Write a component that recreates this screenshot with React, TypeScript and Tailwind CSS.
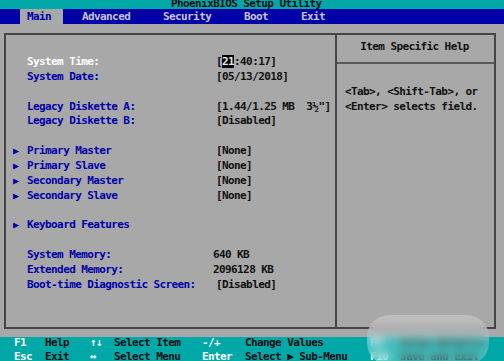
import React from "react";

const mono = { fontFamily: '"DejaVu Sans Mono", "Liberation Mono", monospace' };

type Row =
  | { blank: true }
  | { arrow?: boolean; label: string; value?: React.ReactNode; white?: boolean; shift?: boolean };

const rows: Row[] = [
  {
    label: "System Time:",
    white: true,
    value: (
      <span>
        [<span className="bg-black text-[#e8e8e8]">21</span>:40:17]
      </span>
    ),
  },
  { label: "System Date:", value: "[05/13/2018]" },
  { blank: true },
  { label: "Legacy Diskette A:", value: "[1.44/1.25 MB  3½\"]" },
  { label: "Legacy Diskette B:", value: "[Disabled]" },
  { blank: true },
  { arrow: true, label: "Primary Master", value: "[None]" },
  { arrow: true, label: "Primary Slave", value: "[None]" },
  { arrow: true, label: "Secondary Master", value: "[None]" },
  { arrow: true, label: "Secondary Slave", value: "[None]" },
  { blank: true },
  { arrow: true, label: "Keyboard Features" },
  { blank: true },
  { label: "System Memory:", value: "640 KB", shift: true },
  { label: "Extended Memory:", value: "2096128 KB", shift: true },
  { label: "Boot-time Diagnostic Screen:", value: "[Disabled]" },
];

export default function App() {
  return (
    <div
      className="w-[504px] h-[361px] bg-[#a8a8a8] flex flex-col overflow-hidden text-[11px] font-bold tracking-[-0.6px] relative"
      style={mono}
    >
      {/* title bar */}
      <div className="h-[9px] bg-[#00a8a8] overflow-hidden shrink-0">
        <div className="pl-[171px] leading-[11px] -mt-[2px] text-[#101010] whitespace-pre">
          PhoenixBIOS Setup Utility
        </div>
      </div>

      {/* menu bar */}
      <div className="h-[15px] bg-[#0000a8] flex leading-[15px] shrink-0 text-[#c4c4d4] whitespace-pre">
        <div className="ml-[20px] w-[43px] pl-[7px] bg-[#a8a8a8] text-[#0000a8]">Main</div>
        <div className="ml-[19px] w-[81px]">Advanced</div>
        <div className="w-[81px]">Security</div>
        <div className="w-[57px]">Boot</div>
        <div>Exit</div>
      </div>

      {/* main area */}
      <div className="flex-1 pt-[9px] pb-[8px] pl-[4px] pr-[8px] flex">
        <div className="flex-1 border-2 border-[#454545] grid grid-cols-[329px_2px_1fr]">
          <div className="pt-[20px] leading-[14.85px] whitespace-pre">
            {rows.map((r, i) =>
              "blank" in r ? (
                <div key={i} className="h-[14.85px]" />
              ) : (
                <div key={i} className="grid grid-cols-[14px_189px_1fr] pl-[7px]">
                  <div className="text-[#0000a8] text-[10px] tracking-normal">{r.arrow ? "▶" : ""}</div>
                  <div className={r.white ? "text-white" : "text-[#0000a8]"}>{r.label}</div>
                  <div className={"text-[#101010] " + (r.shift ? "-ml-[3px]" : "")}>{r.value}</div>
                </div>
              )
            )}
          </div>
          <div className="bg-[#454545]" />
          <div className="flex flex-col">
            <div className="h-[29px] border-b-2 border-[#5a5a5a] pt-[5px] leading-[14.85px] text-center text-[#101010] pr-[2px]">
              Item Specific Help
            </div>
            <div className="pt-[21px] pl-[8px] leading-[14.85px] text-[#101010] whitespace-pre">
              <div>{"<Tab>, <Shift-Tab>, or"}</div>
              <div>{"<Enter> selects field."}</div>
            </div>
          </div>
        </div>
      </div>

      {/* footer */}
      <div className="h-[24px] bg-[#00a8a8] shrink-0 leading-[14px] whitespace-pre text-[#101010]">
        <div className="grid grid-cols-[31px_45px_24px_88px_43px_125px_1fr] pl-[14px] -mt-[1px]">
          <div className="text-white">F1</div>
          <div>Help</div>
          <div className="text-white">↑↓</div>
          <div>Select Item</div>
          <div className="text-white">-/+</div>
          <div>Change Values</div>
          <div>
            <span className="text-white">F9</span>   Setup Defaults
          </div>
          <div className="text-white">Esc</div>
          <div>Exit</div>
          <div className="text-white">↔</div>
          <div>Select Menu</div>
          <div className="text-white">Enter</div>
          <div>Select ▶ Sub-Menu</div>
          <div>
            <span className="text-white">F10</span>  Save and Exit
          </div>
        </div>
      </div>

      {/* watermark blur */}
      <div className="absolute left-[367px] top-[315px] w-[122px] h-[50px] rounded-[22px] bg-white/25 backdrop-blur-[4px]" />
    </div>
  );
}
